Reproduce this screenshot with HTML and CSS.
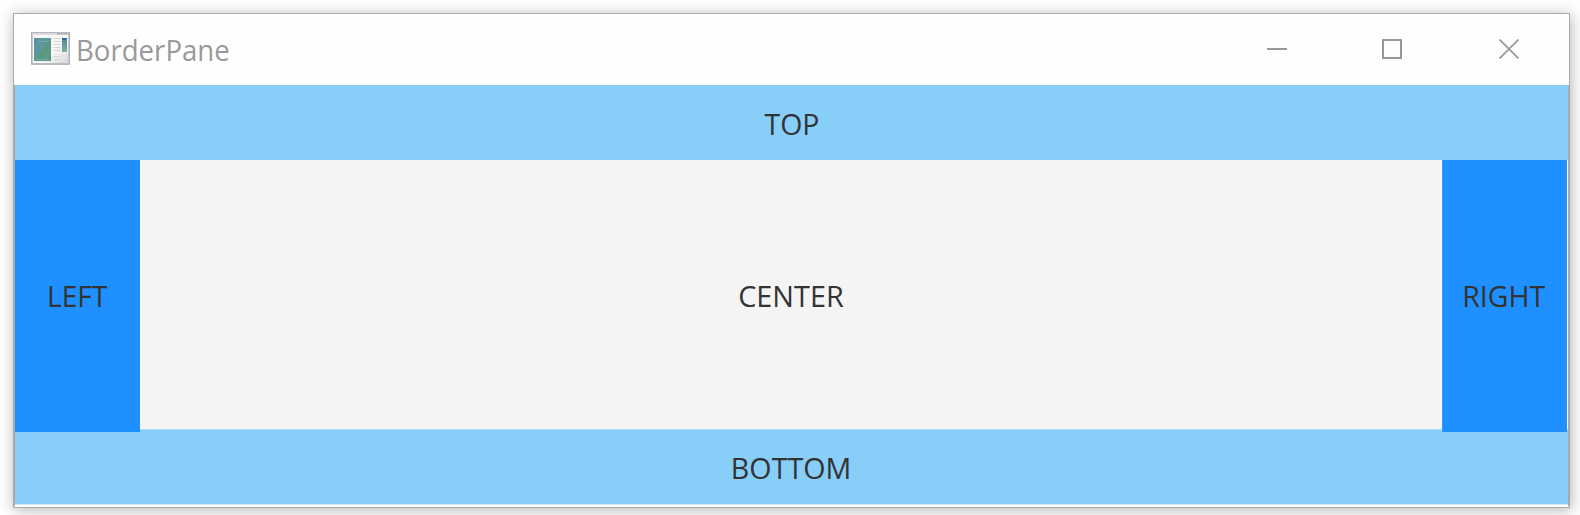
FILE: index.html
```
<!DOCTYPE html>
<html lang="en">
<head>
<meta charset="utf-8">
<title>BorderPane</title>
<link rel="stylesheet" href="styles.css">
</head>
<body>
<main class="window">
  <header class="titlebar">
    <svg class="app-icon" width="39" height="33" viewBox="0 0 39 33">
      <defs>
        <linearGradient id="panel" x1="0" y1="0" x2="1" y2="1"><stop offset="0" stop-color="#5b91a6"/><stop offset=".48" stop-color="#5f989c"/><stop offset=".52" stop-color="#57997f"/><stop offset="1" stop-color="#5a9a84"/></linearGradient>
        <linearGradient id="paper" x1="0" y1="0" x2="1" y2="1"><stop offset=".6" stop-color="#f7f7f7"/><stop offset="1" stop-color="#d4d4d6"/></linearGradient>
        <linearGradient id="strip" x1="0" y1="0" x2="0" y2="1"><stop offset="0" stop-color="#4f86a0"/><stop offset="1" stop-color="#7fb0a2"/></linearGradient>
      </defs>
      <rect x="1" y="1" width="37" height="31" fill="url(#paper)" stroke="#c9c9d0" stroke-width="2"/>
      <path d="M.5 .5h38v31.500H.5z" fill="none" stroke="#adadb5"/>
      <path d="M1 1.800h37" stroke="#d6d6dc" stroke-width="2"/>
      <path d="M26 1.800h12" stroke="#aaaaaf" stroke-width="1.500" stroke-dasharray="3 .6"/>
      <rect x="3" y="6" width="17" height="23" fill="url(#panel)"/>
      <path d="M7 9.500h10M5 27.500h13" stroke="#82b3ac" stroke-width=".7"/>
      <path d="M23 6.500h6M22.500 9.500h7M22.500 12.500h7M22.500 15.500h7M22.500 18.500h7M22.500 24.500h7M23 27.500h6" stroke="#d4d4d6"/>
      <rect x="31" y="6" width="5" height="14" fill="url(#strip)"/>
      <path d="M31 7h4.500" stroke="#286594" stroke-width="2"/>
    </svg>
    <span class="title">BorderPane</span>
    <div class="controls">
      <svg width="20" height="20" viewBox="0 0 20 20"><path d="M0 10h20"/></svg>
      <svg width="20" height="20" viewBox="0 0 20 20"><path d="M1 1h18v18H1z"/></svg>
      <svg class="close" width="20" height="20" viewBox="0 0 20 20"><path d="M.5 .5l19 19M19.500 .5l-19 19" stroke-width="1.700"/></svg>
    </div>
  </header>
  <div class="pane">
    <section class="top"><span class="t-top">TOP</span></section>
    <section class="left"><span class="t-left">LEFT</span></section>
    <section class="center"><span class="t-center">CENTER</span></section>
    <section class="right"><span class="t-right">RIGHT</span></section>
    <section class="bottom"><span class="t-bottom">BOTTOM</span></section>
  </div>
</main>
</body>
</html>
```
FILE: styles.css
```
* { box-sizing: border-box; }
body {
  margin: 0;
  padding: 13px 10px 7px 13px;
  height: 515px;
  overflow: hidden;
  background: #fff;
  font: 30px/40px "Open Sans", "Noto Sans", sans-serif;
  color: #333;
}
.window {
  height: 495px;
  border: 1px solid #a9a9a9;
  background: #fefefe;
  box-shadow: 1px 2px 14px rgba(0, 0, 0, .3);
}
.titlebar {
  display: flex;
  height: 71px;
  padding: 18px 50px 0 17px;
  color: #999;
}
.title { margin: -2px 0 0 6px; transform: scaleX(.92); transform-origin: 0 50%; }
.controls { display: flex; gap: 95px; margin: 7px 0 0 auto; }
.controls .close { margin-left: 2px; }
.controls svg { display: block; fill: none; stroke: #999; stroke-width: 2; }
.pane {
  display: grid;
  grid-template: 75px 269px 75px / 125px 1fr 126px;
  height: 421px;
  border: solid #a9a9a9;
  border-width: 0 1px;
  background: #fefefe;
}
.pane section { display: flex; align-items: center; justify-content: center; white-space: nowrap; }
.pane .top, .pane .bottom { grid-column: 1 / -1; background: #87cef9; }
.pane .bottom { border-top: 1px solid #b5def8; box-shadow: 0 1px #cbeafd; }
.pane .left, .pane .right { height: 272px; z-index: 1; background: #1e90ff; }
.pane .right { width: 125px; border-left: 1px solid #3a9dfc; }
.pane .center { background: #f4f4f4; }
.pane .top, .pane .center, .pane .bottom { padding-top: 2px; }
.pane .right { padding-right: 2px; }
.t-top { transform: scaleX(.95); }
.t-left { transform: scaleX(.94); }
.t-center { transform: scaleX(.96); }
.t-right { transform: scaleX(.95); }
.t-bottom { transform: scaleX(.955); }
```
